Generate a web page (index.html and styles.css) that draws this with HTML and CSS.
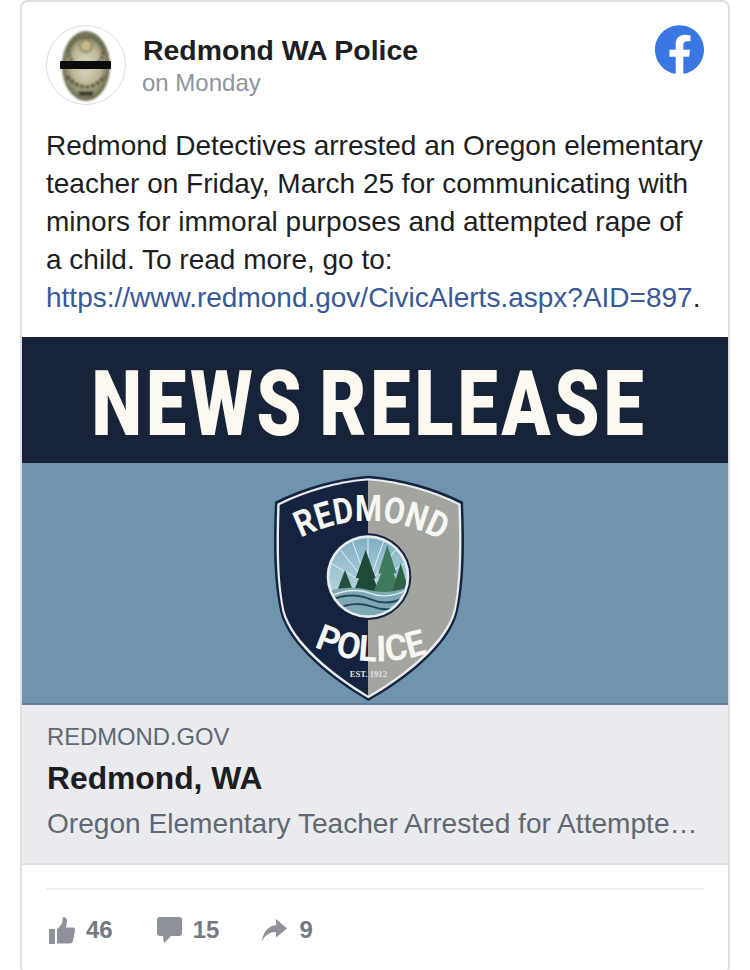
FILE: index.html
```html
<!DOCTYPE html>
<html lang="en">
<head>
<meta charset="utf-8">
<title>Redmond WA Police</title>
<link rel="stylesheet" href="styles.css">
</head>
<body>
<article class="card">
  <header class="head">
    <div class="avatar">
      <svg viewBox="0 0 78 78" width="78" height="78">
        <defs>
          <radialGradient id="bd" cx="50%" cy="50%" r="55%">
            <stop offset="0" stop-color="#e0dcc4"/><stop offset=".55" stop-color="#b9b596"/><stop offset="1" stop-color="#55543a"/>
          </radialGradient>
          <filter id="soft"><feGaussianBlur stdDeviation=".8"/></filter>
        </defs>
        <g filter="url(#soft)">
          <ellipse cx="39" cy="40" rx="24" ry="35" fill="url(#bd)"/>
          <ellipse cx="39" cy="26" rx="17" ry="15" fill="none" stroke="#5d5c40" stroke-width="3.500" stroke-dasharray="3 1.500"/>
          <circle cx="39" cy="20" r="6" fill="#c9b98a" stroke="#8b8660" stroke-width="2"/>
          <path d="M20 50 Q39 72 58 50" fill="none" stroke="#5b5a3e" stroke-width="4" stroke-dasharray="4 1.500"/>
          <rect x="32" y="65" width="14" height="5" fill="#3f3f2e"/>
        </g>
        <rect x="13" y="35" width="51" height="8" rx="1" fill="#0b0b0b"/>
      </svg>
    </div>
    <div class="who">
      <div class="name">Redmond WA Police</div>
      <div class="when">on Monday</div>
    </div>
    <svg class="fb" viewBox="0 0 24 24" width="49" height="49"><path fill="#3a77e3" d="M24 12.073c0-6.627-5.373-12-12-12s-12 5.373-12 12c0 5.990 4.388 10.954 10.125 11.854v-8.385H7.078v-3.470h3.047V9.430c0-3.007 1.792-4.669 4.533-4.669 1.312 0 2.686.235 2.686.235v2.953H15.830c-1.491 0-1.956.925-1.956 1.874v2.250h3.328l-.532 3.470h-2.796v8.385C19.612 23.027 24 18.062 24 12.073z"/></svg>
  </header>
  <p class="body">Redmond Detectives arrested an Oregon elementary teacher on Friday, March 25 for communicating with minors for immoral purposes and attempted rape of a child. To read more, go to: <a class="link" href="#">https://www.redmond.gov/CivicAlerts.aspx?AID=897</a>.</p>

  <div class="banner">
    <svg class="banner-title" viewBox="0 0 706 126" width="706" height="126">
      <text transform="scale(.8 1)" x="87" y="98" textLength="695" lengthAdjust="spacingAndGlyphs" class="news">NEWS RELEASE</text>
    </svg>
  </div>
  <div class="crest">
    <svg viewBox="0 0 660 735" width="220" height="245">
      <defs>
        <clipPath id="disc"><circle cx="327" cy="335" r="116"/></clipPath>
        <clipPath id="shield"><path d="M328 46 Q190 58 62 120 C58 250 58 350 76 436 C100 530 225 630 328 692 C435 630 560 530 584 436 C602 350 602 250 598 120 Q470 58 328 46 Z"/></clipPath>
        <linearGradient id="sky" x1="0" y1="0" x2="0" y2="1"><stop offset="0" stop-color="#7fb0c4"/><stop offset="1" stop-color="#cfe3e6"/></linearGradient>
      </defs>
      <path d="M328 32 Q180 44 48 110 C42 250 44 350 64 442 C90 545 220 645 328 708 C440 645 570 545 596 442 C616 350 618 250 612 110 Q480 44 328 32 Z" fill="#15233f"/>
      <path d="M328 40 Q186 52 55 116 C50 250 52 350 70 439 C95 538 222 638 328 700 C438 638 565 538 590 439 C608 350 610 250 605 116 Q474 52 328 40 Z" fill="#e8ecee"/>
      <g clip-path="url(#shield)">
        <rect x="0" y="0" width="328" height="735" fill="#15233f"/>
        <rect x="328" y="0" width="332" height="735" fill="#a4a49e"/>
      </g>
      <path id="arcTop" d="M125 218 Q328 118 532 218" fill="none"/>
      <path id="arcBottom" d="M165 545 Q330 622 505 565" fill="none"/>
      <text class="crest-text"><textPath href="#arcTop" textLength="440" lengthAdjust="spacingAndGlyphs">REDMOND</textPath></text>
      <text class="crest-text"><textPath href="#arcBottom" textLength="350" lengthAdjust="spacingAndGlyphs">POLICE</textPath></text>
      <circle cx="327" cy="335" r="130" fill="#15233f"/>
      <circle cx="327" cy="335" r="124" fill="#e8ecee"/>
      <circle cx="327" cy="335" r="116" fill="url(#sky)"/>
      <g clip-path="url(#disc)">
        <g stroke="#e3eff0" stroke-width="3">
          <path d="M327 360 L327 215M327 360 L277 220M327 360 L377 220M327 360 L237 245M327 360 L417 245M327 360 L207 290M327 360 L447 290"/>
        </g>
        <path d="M320 255 L350 340 L290 340 Z M322 285 L362 385 L282 385 Z" fill="#1f4a38"/>
        <path d="M385 240 L412 325 L358 325 Z M385 280 L428 385 L342 385 Z" fill="#3f7a5c"/>
        <path d="M258 315 L285 385 L232 385 Z" fill="#274f3d"/>
        <path d="M425 295 L452 385 L398 385 Z" fill="#2f6048"/>
        <path d="M205 378 Q270 360 330 375 T450 365 V460 H205 Z" fill="#7ea9b4"/>
        <path d="M210 408 Q275 378 335 403 T450 388 M225 435 Q285 405 340 425 T440 415" fill="none" stroke="#23475a" stroke-width="6"/>
        <path d="M215 392 Q285 365 335 385 T450 372" fill="none" stroke="#dfeaea" stroke-width="4"/>
      </g>
      <text x="328" y="636" class="est">EST. 1912</text>
    </svg>
  </div>
  <div class="preview">
    <div class="domain">REDMOND.GOV</div>
    <div class="ptitle">Redmond, WA</div>
    <div class="pdesc">Oregon Elementary Teacher Arrested for Attempte…</div>
  </div>
  <footer class="foot">
    <div class="stats">
      <div class="stat">
        <svg viewBox="0 0 26 27" width="26" height="27"><path class="ic" d="M0 12h6v15H1a1 1 0 0 1-1-1zM8 12.500L13 6.500 14 0q4.500.300 4 5L17 10.500h7q2.300.300 2 3L24 24q-.4 2.500-3 2.500H8z"/></svg>
        <span class="num n1">46</span>
      </div>
      <div class="stat">
        <svg viewBox="0 0 25 26" width="25" height="26"><path class="ic" d="M3 0h19a3 3 0 0 1 3 3v13a3 3 0 0 1-3 3h-8l-7 7-1-7H3a3 3 0 0 1-3-3V3a3 3 0 0 1 3-3z"/></svg>
        <span class="num n2">15</span>
      </div>
      <div class="stat">
        <svg viewBox="0 0 25 22" width="25" height="22"><path class="ic" d="M14 0l11 9.500L14 18.500V13Q5 12.500 0 22 2 8 14 6z"/></svg>
        <span class="num n3">9</span>
      </div>
    </div>
  </footer>
</article>
</body>
</html>
```
FILE: styles.css
```css
html, body { margin: 0; padding: 0; background: #fff; }
body { height: 970px; overflow: hidden; font-family: "Liberation Sans", Arial, sans-serif; }

.card {
  box-sizing: border-box;
  width: 710px;
  height: 975px;
  margin-left: 20px;
  border: 2px solid #dfe0e2;
  border-radius: 8px;
  background: #fff;
  overflow: hidden;
}

.head { display: flex; align-items: center; padding: 23px 24px 0; }
.avatar {
  box-sizing: border-box;
  width: 80px; height: 80px;
  border: 1px solid #dcdde0;
  border-radius: 50%;
  overflow: hidden;
  flex: none;
}
.avatar svg { display: block; }
.who { flex: 1; margin-left: 17px; margin-top: 1px; }
.name { font-size: 28.400px; line-height: 34px; font-weight: 700; color: #1c1e21; white-space: nowrap; }
.when { font-size: 24px; line-height: 32px; color: #90949c; margin-left: -1px; }
.fb { flex: none; margin-top: -31px; }

.body {
  margin: 0;
  padding: 22px 24px 20px;
  font-size: 28px;
  line-height: 38px;
  color: #1c1e21;
}
.link { color: #385898; text-decoration: none; }

.banner { height: 126px; background: #162339; }
.banner-title { display: block; }
.news { font-family: "Roboto", "Liberation Sans", sans-serif; font-weight: 900; font-size: 90px; letter-spacing: 5px; word-spacing: -10px; fill: #fbf9f0; }

.crest {
  height: 242px;
  background: #6f95ae;
  border-bottom: 2px solid #5f7f96;
  box-sizing: border-box;
  display: flex;
  justify-content: center;
  align-items: flex-start;
  overflow: hidden;
  padding-right: 12px;
}
.crest svg { flex: none; margin-top: 2px; }
.crest-text { font-family: "Roboto", "Liberation Sans", sans-serif; font-weight: 700; font-size: 108px; fill: #f6f6f2; }
.est { font-family: "Liberation Serif", serif; font-weight: 700; font-size: 26px; fill: #dfe3e6; text-anchor: middle; }

.preview {
  height: 160px;
  box-sizing: border-box;
  padding: 17px 24px 0;
  background: #e9ebee;
  border-bottom: 2px solid #dddfe2;
}
.domain { font-size: 23.800px; line-height: 30px; color: #606770; margin-left: 1px; }
.ptitle { font-size: 31.800px; line-height: 40px; margin-top: 6px; margin-left: 1px; font-weight: 700; color: #1c1e21; }
.pdesc {
  font-size: 28.100px; line-height: 38px; margin-top: 7px; margin-left: 1px; color: #606770;
  white-space: nowrap;
}

.foot { padding: 23px 24px 0; }
.stats {
  display: flex; align-items: center;
  border-top: 2px solid #eeeff1;
  padding-top: 26px;
  padding-left: 3px;
}
.stat { display: flex; align-items: center; }
.stat svg { display: block; }
.ic { fill: #8d9199; }
.num { font-size: 24px; font-weight: 700; color: #757a82; margin-left: 11px; }
.n1 { margin-right: 44px; }
.n2 { margin-right: 43px; }
.n3 { margin-left: 12px; }
```
